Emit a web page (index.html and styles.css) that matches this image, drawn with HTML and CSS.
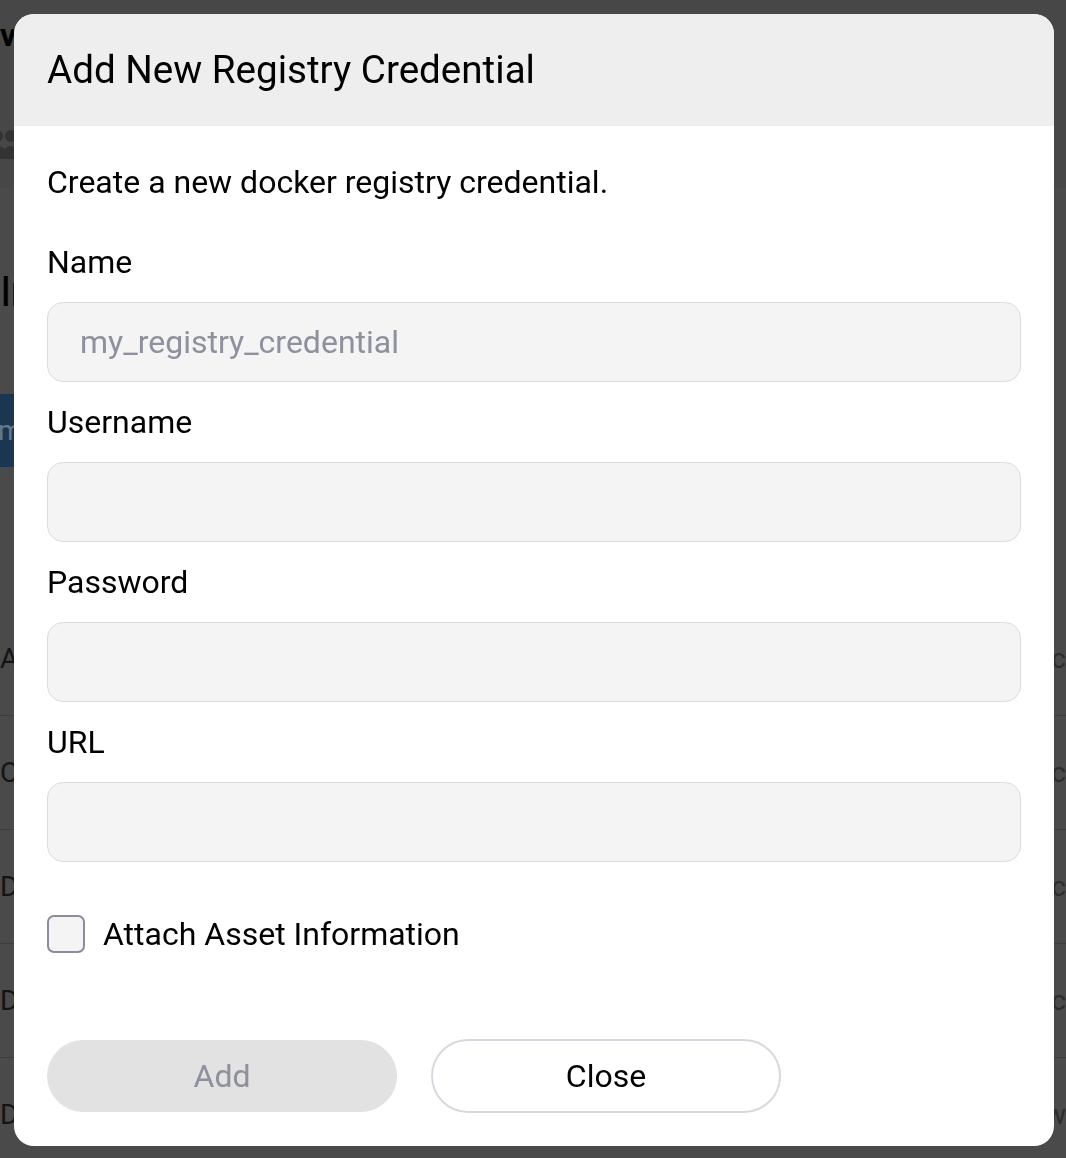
FILE: index.html
```html
<!DOCTYPE html>
<html lang="en">
<head>
<meta charset="utf-8">
<title>Add New Registry Credential</title>
<link rel="stylesheet" href="styles.css">
</head>
<body>
<div class="page">
  <div class="page-top">
    <div class="page-title">vo</div>
    <div class="page-icon">
      <svg width="34" height="34" viewBox="0 0 34 34"><circle cx="11" cy="9" r="6" fill="#333"/><circle cx="25" cy="9" r="6" fill="#333"/><path d="M0 32c0-9 5-13 11-13s11 4 11 13z" fill="#333"/><path d="M16 32c0-9 4-13 9-13s9 4 9 13z" fill="#333"/></svg>
    </div>
  </div>
  <div class="page-heading">Ir</div>
  <div class="page-tabs"><span class="tab-text">m</span></div>
  <div class="page-gap"></div>
  <div class="page-row"><span>A</span><span>c</span></div>
  <div class="page-row"><span>C</span><span>c</span></div>
  <div class="page-row"><span>D</span><span>c</span></div>
  <div class="page-row"><span>D</span><span>c</span></div>
  <div class="page-row"><span>D</span><span>w</span></div>
</div>

<div class="modal">
  <div class="modal-header">
    <h1 class="modal-title">Add New Registry Credential</h1>
  </div>
  <div class="modal-body">
    <p class="modal-desc">Create a new docker registry credential.</p>
    <div class="fields">
      <div class="field">
        <label class="field-label">Name</label>
        <input class="field-input" type="text" placeholder="my_registry_credential">
      </div>
      <div class="field">
        <label class="field-label">Username</label>
        <input class="field-input" type="text">
      </div>
      <div class="field">
        <label class="field-label">Password</label>
        <input class="field-input" type="password">
      </div>
      <div class="field">
        <label class="field-label">URL</label>
        <input class="field-input" type="text">
      </div>
    </div>
    <label class="check-row">
      <span class="check-box"></span>
      <span class="check-label">Attach Asset Information</span>
    </label>
    <div class="actions">
      <button class="btn btn-add" type="button">Add</button>
      <button class="btn btn-close" type="button">Close</button>
    </div>
  </div>
</div>
</body>
</html>
```

FILE: styles.css
```css
* { box-sizing: border-box; }

html, body {
  margin: 0;
  padding: 0;
}

body {
  background: #4a4a4a;
  font-family: Roboto, "Liberation Sans", Arial, sans-serif;
  width: 1066px;
  height: 1158px;
  overflow: hidden;
}

/* underlying (dimmed) page */
.page {
  display: flex;
  flex-direction: column;
  height: 1158px;
}

.page > * { flex-shrink: 0; }

.page-top {
  height: 188px;
  background: #474747;
  display: flex;
  flex-direction: column;
}

.page-title {
  margin-top: 17px;
  font-size: 32px;
  font-weight: 700;
  line-height: 36px;
  letter-spacing: -2px;
  color: #000;
}

.page-icon {
  margin-top: 74px;
  margin-left: -14px;
  height: 34px;
}

.page-heading {
  margin-top: 80px;
  font-size: 42px;
  line-height: 48px;
  letter-spacing: -1px;
  color: #000;
}

.page-tabs {
  margin-top: 78px;
  width: 260px;
  height: 73px;
  background: #1b3650;
  display: flex;
  align-items: center;
}

.tab-text {
  margin-left: -2px;
  font-size: 28px;
  color: #67778a;
}

.page-gap {
  height: 135px;
}

.page-row {
  height: 114px;
  border-bottom: 1px solid #3e3e3e;
  display: flex;
  justify-content: space-between;
  align-items: center;
  font-size: 28px;
  color: #141414;
}

.page-row span:last-child { color: #2c2c2c; }

/* modal */
.modal {
  position: fixed;
  top: 14px;
  left: 14px;
  width: 1040px;
  height: 1132px;
  background: #fff;
  border-radius: 20px;
  overflow: hidden;
  display: flex;
  flex-direction: column;
}

.modal-header {
  height: 113px;
  background: #eeeeee;
  display: flex;
  align-items: center;
  padding: 0 33px;
}

.modal-title {
  margin: 0;
  font-size: 38.6px;
  font-weight: 400;
  color: #000;
  line-height: 1;
}

.modal-body {
  padding: 36px 33px 33px;
  display: flex;
  flex-direction: column;
}

.modal-desc {
  margin: 0;
  font-size: 32px;
  line-height: 40px;
  color: #000;
}

.fields {
  margin-top: 40px;
  display: flex;
  flex-direction: column;
  gap: 20px;
}

.field {
  display: flex;
  flex-direction: column;
  gap: 20px;
}

.field-label {
  font-size: 32px;
  line-height: 40px;
  color: #000;
}

.field-input {
  height: 80px;
  width: 100%;
  background: #f4f4f4;
  border: 1.5px solid #dcdcdf;
  border-radius: 16px;
  padding: 0 32px;
  font-family: inherit;
  font-size: 32px;
  color: #000;
  outline: none;
}

.field-input::placeholder {
  color: #8e909b;
}

.check-row {
  margin-top: 52px;
  height: 40px;
  display: flex;
  align-items: center;
  gap: 18px;
}

.check-box {
  width: 38px;
  height: 38px;
  border: 2px solid #8b8e9a;
  border-radius: 7px;
  background: #f4f4f4;
}

.check-label {
  font-size: 32px;
  color: #000;
}

.actions {
  margin-top: 85px;
  height: 74px;
  display: flex;
  align-items: center;
  gap: 34px;
}

.btn {
  width: 350px;
  border-radius: 37px;
  font-family: inherit;
  font-size: 32px;
  cursor: pointer;
}

.btn-add {
  height: 72px;
  background: #e2e2e2;
  border: 1px solid #e2e2e2;
  color: #8e909b;
}

.btn-close {
  height: 74px;
  background: #fff;
  border: 2px solid #d8d8de;
  color: #000;
}
```
